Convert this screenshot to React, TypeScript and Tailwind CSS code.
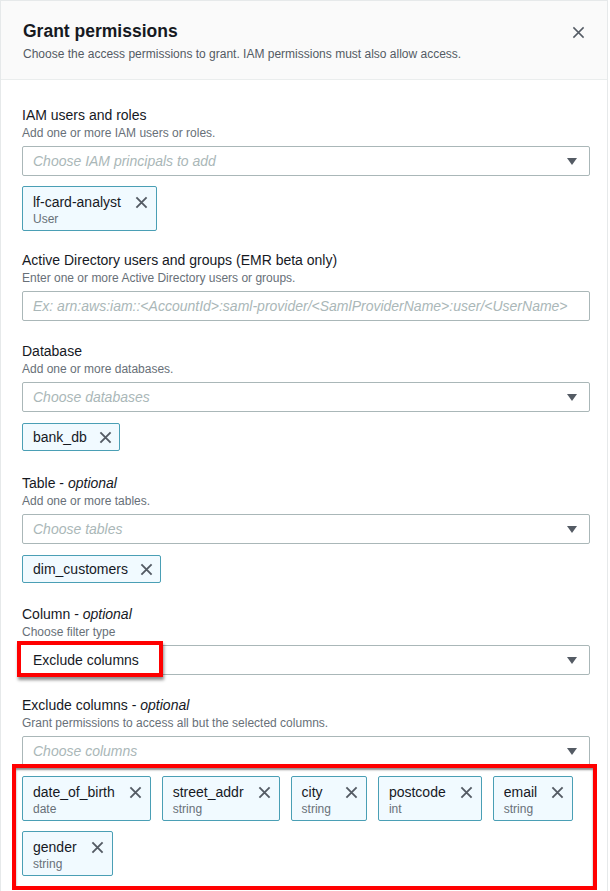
import React from "react";

type Tok = { name: string; sub?: string };

const Caret = () => (
  <svg width="10" height="7" viewBox="0 0 10 7" className="shrink-0">
    <path d="M0 0 H10 L5 7 Z" fill="#545b64" />
  </svg>
);

const XIcon = ({ size = 13, stroke = 2 }: { size?: number; stroke?: number }) => (
  <svg width={size} height={size} viewBox="0 0 14 14" className="shrink-0">
    <path d="M1.5 1.5 L12.5 12.5 M12.5 1.5 L1.5 12.5" stroke="#545b64" strokeWidth={stroke} fill="none" />
  </svg>
);

const Token = ({ name, sub }: Tok) => (
  <div
    className={`flex items-start rounded-[2px] border border-[#4a9fb5] bg-[#f1faff] pl-[10px] ${
      sub ? "pb-[3px] pr-[8px] pt-[6px]" : "py-[4px] pr-[7px]"
    }`}
  >
    <div className="flex flex-col">
      <span className="text-[14px] leading-[18px] text-[#16191f]">{name}</span>
      {sub && <span className="text-[12px] leading-[16px] text-[#687078]">{sub}</span>}
    </div>
    <div className={`mt-[3px] ${sub ? "ml-[14px]" : "ml-[12px]"}`}>
      <XIcon />
    </div>
  </div>
);

const Field = ({
  label,
  optional,
  desc,
  className,
  children,
}: {
  label: string;
  optional?: boolean;
  desc: string;
  className?: string;
  children: React.ReactNode;
}) => (
  <div className={className}>
    <div className="text-[14px] leading-[19px] text-[#16191f]">
      {label}
      {optional && (
        <>
          {" - "}
          <i>optional</i>
        </>
      )}
    </div>
    <div className="text-[12px] leading-[16px] text-[#687078]">{desc}</div>
    {children}
  </div>
);

const Select = ({ placeholder, caret = true }: { placeholder: string; caret?: boolean }) => (
  <div className="mt-[5px] flex h-[30px] items-center justify-between rounded-[2px] border border-[#aab7b8] bg-white pl-[10px] pr-[12px]">
    <span className="whitespace-nowrap text-[14px] italic text-[#aab7b8]">{placeholder}</span>
    {caret && <Caret />}
  </div>
);

const columns: Tok[] = [
  { name: "date_of_birth", sub: "date" },
  { name: "street_addr", sub: "string" },
  { name: "city", sub: "string" },
  { name: "postcode", sub: "int" },
  { name: "email", sub: "string" },
  { name: "gender", sub: "string" },
];

export default function App() {
  return (
    <div className="min-h-[891px] w-[610px] bg-white font-['Liberation_Sans',Arial,sans-serif]">
      <div className="h-[891px] w-[608px] overflow-hidden border-x border-t border-[#e6e9ea]">
        {/* header */}
        <div className="flex items-start justify-between border-b border-[#eaeded] bg-[#fafafa] pb-[17px] pl-[22px] pr-[22px] pt-[18px]">
          <div>
            <h2 className="text-[17.5px] font-bold leading-[24px] text-[#16191f]">Grant permissions</h2>
            <p className="mt-[3px] text-[12px] leading-[16px] text-[#545b64]">
              Choose the access permissions to grant. IAM permissions must also allow access.
            </p>
          </div>
          <div className="mt-[7px]">
            <XIcon size={13} stroke={1.6} />
          </div>
        </div>

        {/* body */}
        <div className="pl-[21px] pr-[17px] pt-[26px]">
          <Field label="IAM users and roles" desc="Add one or more IAM users or roles.">
            <Select placeholder="Choose IAM principals to add" />
            <div className="mt-[10px] flex">
              <Token name="lf-card-analyst" sub="User" />
            </div>
          </Field>

          <Field
            className="mt-[20px]"
            label="Active Directory users and groups (EMR beta only)"
            desc="Enter one or more Active Directory users or groups."
          >
            <Select
              caret={false}
              placeholder="Ex: arn:aws:iam::<AccountId>:saml-provider/<SamlProviderName>:user/<UserName>"
            />
          </Field>

          <Field className="mt-[21px]" label="Database" desc="Add one or more databases.">
            <Select placeholder="Choose databases" />
            <div className="mt-[11px] flex">
              <Token name="bank_db" />
            </div>
          </Field>

          <Field className="mt-[23px]" label="Table" optional desc="Add one or more tables.">
            <Select placeholder="Choose tables" />
            <div className="mt-[11px] flex">
              <Token name="dim_customers" />
            </div>
          </Field>

          <Field className="mt-[22px]" label="Column" optional desc="Choose filter type">
            <div className="relative mt-[5px] flex h-[30px] items-center justify-between rounded-[2px] border border-[#aab7b8] bg-white pl-[10px] pr-[12px]">
              <div className="pointer-events-none absolute left-[-6px] top-[-5px] h-[36px] w-[146px] border-[4px] border-[#f00] bg-white shadow-[1px_3px_3px_rgba(0,0,0,0.45)]" />
              <span className="relative z-10 text-[14px] text-[#16191f]">Exclude columns</span>
              <Caret />
            </div>
          </Field>

          <Field
            className="mt-[21px]"
            label="Exclude columns"
            optional
            desc="Grant permissions to access all but the selected columns."
          >
            <Select placeholder="Choose columns" />
            <div className="relative z-10 -mt-[2px] ml-[-10px] w-[585px] border-[4px] border-[#f00] pb-[10px] pl-[6px] pt-[8px] shadow-[inset_0_2px_2px_rgba(0,0,0,0.45)]">
              <div className="flex flex-wrap gap-x-[11px] gap-y-[10px]">
                {columns.map((c) => (
                  <Token key={c.name} name={c.name} sub={c.sub} />
                ))}
              </div>
            </div>
          </Field>
        </div>
      </div>
    </div>
  );
}
